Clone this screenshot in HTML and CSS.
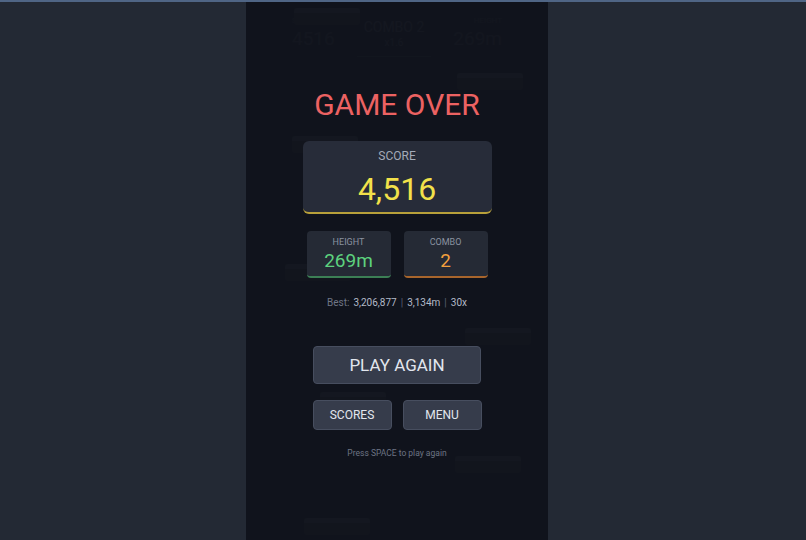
FILE: index.html
```html
<!DOCTYPE html>
<html lang="en">
<head>
<meta charset="utf-8">
<title>Game Over</title>
<link rel="stylesheet" href="styles.css">
</head>
<body>
<div class="topbar"></div>
<div class="stage">
  <div class="game">
    <!-- world behind the overlay -->
    <div class="hud">
      <div class="hud-stat">
        <span class="hud-label">SCORE</span>
        <span class="hud-value">4516</span>
      </div>
      <div class="hud-combo">
        <span class="hud-combo-title">COMBO 2</span>
        <span class="hud-combo-mult">x1.6</span>
      </div>
      <div class="hud-stat hud-right">
        <span class="hud-label">HEIGHT</span>
        <span class="hud-value">269m</span>
      </div>
    </div>
    <div class="platform" style="left:48px;top:6px"></div>
    <div class="platform" style="left:211px;top:71px"></div>
    <div class="platform" style="left:46px;top:134px"></div>
    <div class="platform" style="left:39px;top:262px"></div>
    <div class="platform" style="left:219px;top:326px"></div>
    <div class="platform" style="left:74px;top:390px"></div>
    <div class="platform" style="left:209px;top:454px"></div>
    <div class="platform" style="left:58px;top:516px"></div>

    <div class="overlay">
      <h1 class="title">GAME OVER</h1>
      <div class="score-card">
        <div class="card-label">SCORE</div>
        <div class="score-value">4,516</div>
      </div>
      <div class="stat-row">
        <div class="stat-card stat-height">
          <div class="stat-label">HEIGHT</div>
          <div class="stat-value">269m</div>
        </div>
        <div class="stat-card stat-combo">
          <div class="stat-label">COMBO</div>
          <div class="stat-value">2</div>
        </div>
      </div>
      <div class="best">
        <span class="best-label">Best:</span>
        <span class="best-val">3,206,877</span>
        <span class="sep">|</span>
        <span class="best-val">3,134m</span>
        <span class="sep">|</span>
        <span class="best-val">30x</span>
      </div>
      <button class="btn btn-primary">PLAY AGAIN</button>
      <div class="btn-row">
        <button class="btn btn-small">SCORES</button>
        <button class="btn btn-small">MENU</button>
      </div>
      <div class="hint">Press SPACE to play again</div>
    </div>
  </div>
</div>
</body>
</html>
```
FILE: styles.css
```css
* { box-sizing: border-box; }

html, body {
  margin: 0;
  height: 100%;
}

body {
  background: #232934;
  font-family: Roboto, "Noto Sans", sans-serif;
  overflow: hidden;
  display: flex;
  flex-direction: column;
}

.topbar {
  height: 2px;
  background: #4f6585;
  flex: none;
}

.stage {
  flex: 1;
  display: flex;
  padding-left: 246px;
}

.game {
  position: relative;
  width: 302px;
  height: 538px;
  background: #1e2433;
  overflow: hidden;
}

/* HUD drawn in the game world */
.hud {
  display: flex;
  justify-content: space-between;
  align-items: flex-start;
  padding: 13px 46px 0 46px;
  color: #2f3647;
}

.hud-stat {
  display: flex;
  flex-direction: column;
  align-items: flex-start;
}

.hud-right { align-items: flex-end; }

.hud-label {
  font-size: 8px;
  line-height: 12px;
}

.hud-value {
  font-size: 19px;
  line-height: 24px;
}

.hud-combo {
  display: flex;
  flex-direction: column;
  align-items: center;
  width: 74px;
  padding: 3px 0 6px;
  border-bottom: 1px solid #2a3142;
}

.hud-combo-title {
  font-size: 14px;
  line-height: 18px;
  color: #343c4f;
}

.hud-combo-mult {
  font-size: 10px;
  line-height: 14px;
  color: #343c4f;
}

.platform {
  position: absolute;
  width: 66px;
  height: 17px;
  background: #272e3c;
  border-top: 5px solid #323a4b;
  border-radius: 3px;
}

/* darkened game-over layer */
.overlay {
  position: absolute;
  inset: 0;
  background: rgba(14, 17, 24, 0.84);
  display: flex;
  flex-direction: column;
  align-items: center;
  padding-top: 84px;
}

.title {
  margin: 0;
  font-size: 30px;
  line-height: 38px;
  font-weight: 400;
  color: #ec6262;
}

.score-card {
  margin-top: 17px;
  width: 189px;
  height: 73px;
  background: #272c39;
  border-radius: 6px;
  border-bottom: 2px solid #b8a03a;
  padding-top: 8px;
  text-align: center;
}

.card-label {
  font-size: 12px;
  line-height: 14px;
  color: #a3aab8;
}

.score-value {
  margin-top: 7px;
  font-size: 32px;
  line-height: 38px;
  color: #f2e14a;
}

.stat-row {
  margin-top: 17px;
  display: flex;
  gap: 13px;
}

.stat-card {
  width: 84px;
  height: 47px;
  background: #252a35;
  border-radius: 4px;
  padding-top: 5px;
  text-align: center;
}

.stat-height { border-bottom: 2px solid #3c7f55; }
.stat-combo { border-bottom: 2px solid #a8652c; }

.stat-label {
  font-size: 9px;
  line-height: 12px;
  color: #8a92a0;
}

.stat-value {
  margin-top: 1px;
  font-size: 19px;
  line-height: 24px;
}

.stat-height .stat-value { color: #5dd27e; }
.stat-combo .stat-value { color: #f2a03e; }

.best {
  margin-top: 18px;
  font-size: 10px;
  line-height: 14px;
  color: #6f7686;
  display: flex;
  gap: 4px;
}

.best-val { color: #b3bac8; }
.sep { color: #5a6170; }

.btn {
  font-family: inherit;
  font-weight: 400;
  color: #e2e6ee;
  background: #363c4b;
  border: 1px solid #474e5f;
  border-radius: 4px;
  cursor: pointer;
  padding: 0;
}

.btn-primary {
  margin-top: 36px;
  width: 168px;
  height: 38px;
  font-size: 17px;
}

.btn-row {
  margin-top: 16px;
  display: flex;
  gap: 11px;
}

.btn-small {
  width: 79px;
  height: 30px;
  font-size: 12px;
}

.hint {
  margin-top: 17px;
  font-size: 8.5px;
  line-height: 12px;
  color: #6d7484;
}
```
